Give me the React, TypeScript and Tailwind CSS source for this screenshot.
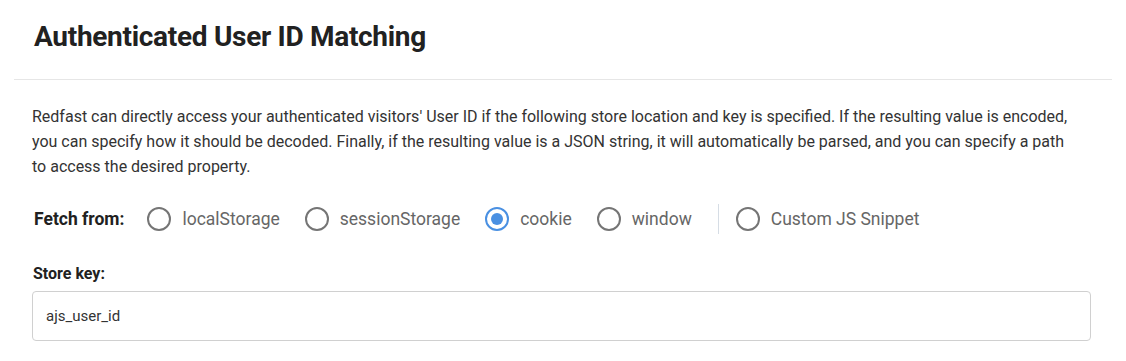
const options = [
  { id: "localStorage", label: "localStorage" },
  { id: "sessionStorage", label: "sessionStorage" },
  { id: "cookie", label: "cookie" },
  { id: "window", label: "window" },
];

function Radio({ label, checked }: { label: string; checked?: boolean }) {
  return (
    <label className="flex items-center gap-[11px] cursor-pointer">
      <span
        className={`w-6 h-6 rounded-full border-2 flex items-center justify-center ${
          checked ? "border-[#4a90e2]" : "border-[#757575]"
        }`}
      >
        {checked && <span className="w-3 h-3 rounded-full bg-[#4a90e2]" />}
      </span>
      <span className="text-[17.5px] text-[#666666]">{label}</span>
    </label>
  );
}

export default function App() {
  return (
    <div className="bg-white w-[1126px] h-[361px] font-['Roboto',sans-serif] text-[#212121]">
      <div className="mx-[14px] border-b border-[#e6e6e6] h-[80px] flex items-center px-5 pb-[6px]">
        <h1 className="text-[28px] font-bold tracking-[-0.3px]">Authenticated User ID Matching</h1>
      </div>

      <div className="px-8 pt-[24px]">
        <p className="text-[16px] leading-[25px] text-[#333333] pr-4">
          Redfast can directly access your authenticated visitors' User ID if the following store location and
          key is specified. If the resulting value is encoded, you can specify how it should be decoded. Finally,
          if the resulting value is a JSON string, it will automatically be parsed, and you can specify a path to
          access the desired property.
        </p>

        {/* Fetch source */}
        <div className="flex items-center mt-[22px] h-[36px]">
          <span className="text-[17.5px] font-bold mr-[23px] pl-[2px]">Fetch from:</span>
          <div className="flex items-center gap-[25px]">
            {options.map((o) => (
              <Radio key={o.id} label={o.label} checked={o.id === "cookie"} />
            ))}
          </div>
          <div className="w-px h-[30px] bg-[#d6dde5] ml-[26px] mr-[17px]" />
          <Radio label="Custom JS Snippet" />
        </div>

        <div className="mt-[25px]">
          <div className="text-[16px] font-bold pl-[1px]">Store key:</div>
          <div className="mt-[5px] w-[1059px] h-[50px] border border-[#d0d0d0] rounded-[4px] flex items-center px-[13px] text-[15px] text-[#333333]">
            ajs_user_id
          </div>
        </div>
      </div>
    </div>
  );
}
